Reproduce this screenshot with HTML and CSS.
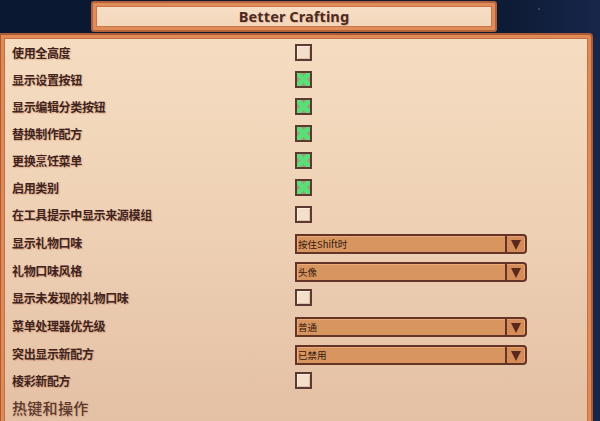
FILE: index.html
```html
<!DOCTYPE html>
<html lang="zh-CN">
<head>
<meta charset="utf-8">
<title>Better Crafting</title>
<link rel="stylesheet" href="styles.css">
</head>
<body>
<div class="screen">
  <span class="star"></span>
  <header class="title-bar"><h1>Better Crafting</h1></header>
  <main class="panel">
    <div class="row"><span class="label">使用全高度</span><span class="cb"></span></div>
    <div class="row"><span class="label">显示设置按钮</span><span class="cb on"></span></div>
    <div class="row"><span class="label">显示编辑分类按钮</span><span class="cb on"></span></div>
    <div class="row"><span class="label">替换制作配方</span><span class="cb on"></span></div>
    <div class="row"><span class="label">更换烹饪菜单</span><span class="cb on"></span></div>
    <div class="row"><span class="label">启用类别</span><span class="cb on"></span></div>
    <div class="row"><span class="label">在工具提示中显示来源模组</span><span class="cb"></span></div>
    <div class="row row-dd"><span class="label">显示礼物口味</span><div class="dd"><span class="dd-field">按住Shift时</span><span class="dd-btn"><i class="tri"></i></span></div></div>
    <div class="row row-dd"><span class="label">礼物口味风格</span><div class="dd"><span class="dd-field">头像</span><span class="dd-btn"><i class="tri"></i></span></div></div>
    <div class="row"><span class="label">显示未发现的礼物口味</span><span class="cb"></span></div>
    <div class="row row-dd"><span class="label">菜单处理器优先级</span><div class="dd"><span class="dd-field">普通</span><span class="dd-btn"><i class="tri"></i></span></div></div>
    <div class="row row-dd"><span class="label">突出显示新配方</span><div class="dd"><span class="dd-field">已禁用</span><span class="dd-btn"><i class="tri"></i></span></div></div>
    <div class="row"><span class="label">棱彩新配方</span><span class="cb"></span></div>
    <h2 class="section">热键和操作</h2>
  </main>
</div>
</body>
</html>
```

FILE: styles.css
```css
html, body {
  margin: 0;
  padding: 0;
  background: #0c1a34;
  overflow: hidden;
}

.screen {
  position: relative;
  width: 600px;
  height: 421px;
  overflow: hidden;
  display: flex;
  flex-direction: column;
  background: linear-gradient(90deg, #0b1831 0%, #0d1b36 85%, #17264a 100%);
}

.star {
  position: absolute;
  left: 538px;
  top: 8px;
  width: 2px;
  height: 2px;
  background: #4b5672;
  border-radius: 1px;
}

/* title plate */
.title-bar {
  flex-shrink: 0;
  box-sizing: border-box;
  margin: 1px 0 0 91px;
  width: 406px;
  height: 31px;
  border: 2px solid #b3623c;
  border-radius: 3px;
  background: linear-gradient(180deg, #f7dfc6 0%, #f3d6bb 100%);
  box-shadow: inset 0 0 0 3px #e08c58, inset 0 0 0 4px #c9754a;
  display: flex;
  align-items: center;
  justify-content: center;
}

.title-bar h1 {
  margin: 0 0 2px 0;
  font-family: "Noto Sans", "DejaVu Sans", sans-serif;
  font-weight: 700;
  font-size: 14.5px;
  color: #4b2a23;
  letter-spacing: 0.1px;
  text-shadow: 1px 1px 0 rgba(214, 140, 100, 0.45);
}

/* options panel */
.panel {
  flex-shrink: 0;
  box-sizing: border-box;
  margin-top: 1px;
  width: 593px;
  height: 440px;
  border: 2px solid #ad5b35;
  border-left-width: 1px;
  border-radius: 0 4px 0 0;
  background: linear-gradient(180deg, #f5ddc1 0%, #efd2b6 40%, #e7c5a9 75%, #e2bca1 100%);
  box-shadow: inset 0 0 0 3px #e08a55, inset 0 0 0 4px #c56f46;
  padding: 4px 0 0 11px;
  display: flex;
  flex-direction: column;
}

.row {
  display: grid;
  grid-template-columns: 283px auto;
  align-items: center;
  height: 27px;
}

.row-dd {
  height: 28px;
}

.label {
  font-family: "Noto Sans CJK SC", "Noto Sans", sans-serif;
  font-weight: 700;
  font-size: 12px;
  letter-spacing: -0.35px;
  color: #3e2420;
  text-shadow: 1px 1px 1px rgba(206, 126, 92, 0.5);
}

/* checkbox */
.cb {
  box-sizing: border-box;
  width: 17px;
  height: 17px;
  border: 2px solid #5d3a31;
  background: #f3dfca;
  box-shadow: inset 1px 1px 0 #fbefe2, inset -1px -1px 0 #dcc1a8;
}

.cb.on {
  background:
    linear-gradient(45deg, transparent 37%, #5ade78 37%, #5ade78 63%, transparent 63%),
    linear-gradient(-45deg, transparent 37%, #5ade78 37%, #5ade78 63%, transparent 63%),
    #9a9f78;
  box-shadow: none;
}

/* dropdown */
.dd {
  display: flex;
  width: 232px;
  height: 20px;
  margin-top: 4px;
}

.dd-field {
  box-sizing: border-box;
  flex: 1;
  height: 20px;
  background: #d99560;
  border: 2px solid #643426;
  border-right-width: 3px;
  box-shadow: inset 1px 1px 0 #e7aa78;
  font-family: "Noto Sans CJK SC", "Noto Sans", sans-serif;
  font-size: 9.5px;
  line-height: 16px;
  color: #33190f;
  padding-left: 1px;
}

.dd-btn {
  box-sizing: border-box;
  width: 20px;
  height: 20px;
  margin-left: -1px;
  background: #d68c58;
  border: 2px solid #643426;
  border-left: none;
  border-radius: 0 4px 4px 0;
  box-shadow: inset -1px 0 0 #e8a673, inset 0 1px 0 #e3a06e;
  display: flex;
  align-items: center;
  justify-content: center;
}

.tri {
  width: 0;
  height: 0;
  margin-top: 1px;
  border-left: 5px solid transparent;
  border-right: 5px solid transparent;
  border-top: 10px solid #5a291d;
}

.section {
  margin: 0;
  height: 28px;
  line-height: 28px;
  font-family: "Noto Sans CJK SC", "Noto Sans", sans-serif;
  font-weight: 500;
  font-size: 15px;
  letter-spacing: 0.3px;
  color: #5a3a30;
  text-shadow: 1px 1px 1px rgba(200, 128, 96, 0.45);
}
```
